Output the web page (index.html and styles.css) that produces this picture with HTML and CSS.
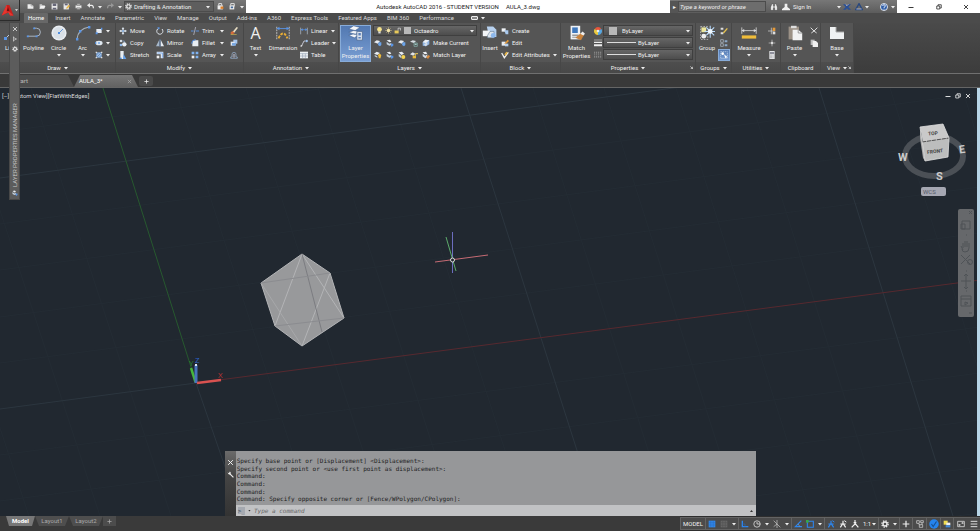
FILE: index.html
```html
<!DOCTYPE html>
<html lang="en">
<head>
<meta charset="utf-8">
<title>Autodesk AutoCAD 2016 - STUDENT VERSION AULA_3.dwg</title>
<link rel="stylesheet" href="styles.css">
</head>
<body>
<svg class="defs" aria-hidden="true">
  <symbol id="caret" viewBox="0 0 4 4"><path d="M0 1h4L2 3.4z" fill="#eee"/></symbol>
  <symbol id="launch" viewBox="0 0 4 4"><path d="M.5.5l3 3M3.5 1v2.5H1" stroke="#ddd" fill="none"/></symbol>
  <symbol id="new" viewBox="0 0 12 12"><path d="M1 2h6l4 3v5H1z" fill="#eee"/><path d="M7 2v3h4" stroke="#888" fill="none"/></symbol>
  <symbol id="open" viewBox="0 0 12 12"><path d="M1 10V2h4l1 2h4v2" fill="#ccc"/><path d="M1 10l2-5h8l-2 5z" fill="#f2f2f2"/></symbol>
  <symbol id="save" viewBox="0 0 12 12"><path d="M1 1h10v10H1z" fill="#e8e8e8"/><path d="M3 1h6v4H3zM3 8h6v3H3z" fill="#667"/></symbol>
  <symbol id="saveas" viewBox="0 0 12 12"><path d="M1 1h9v10H1z" fill="#e8e8e8"/><path d="M3 1h5v3H3z" fill="#667"/><path d="M5 9l5-6 2 2-5 5z" fill="#e7b340"/></symbol>
  <symbol id="print" viewBox="0 0 12 12"><path d="M1 4h10v5H1z" fill="#eee"/><path d="M3 1h6v3H3zM3 8h6v3H3z" fill="#bbb" stroke="#555" stroke-width=".6"/></symbol>
  <symbol id="undo" viewBox="0 0 12 12"><path d="M4 4h4q3 0 3 5" fill="none" stroke="#eee" stroke-width="2"/><path d="M0 4l5-4v8z" fill="#eee"/></symbol>
  <symbol id="redo" viewBox="0 0 12 12"><path d="M8 4H4Q1 4 1 9" fill="none" stroke="#999" stroke-width="2"/><path d="M12 4L7 0v8z" fill="#999"/></symbol>
  <symbol id="gear" viewBox="0 0 12 12"><circle cx="6" cy="6" r="4.7" fill="none" stroke="#eee" stroke-width="2" stroke-dasharray="2 1.7"/><circle cx="6" cy="6" r="3" fill="none" stroke="#eee" stroke-width="2"/></symbol>
  <symbol id="lock" viewBox="0 0 12 12"><path d="M1 4h9v7H1z" fill="#eee"/><path d="M3 4V1h5v3" fill="none" stroke="#eee" stroke-width="1.5"/><path d="M6 6h5v4H6z" fill="#dd7e26"/></symbol>
  <symbol id="lock2" viewBox="0 0 12 12"><path d="M1 4h8v7H1z" fill="#eee"/><path d="M3 4V1h6v5" fill="none" stroke="#eee" stroke-width="1.5"/><path d="M3 6h4v3H3z" fill="#446a9a"/></symbol>
  <symbol id="line" viewBox="0 0 16 16"><path d="M2 14L14 2" stroke="#bcd" /><path d="M1 12h3v3H1zM12 1h3v3h-3z" fill="#5a95e6"/></symbol>
  <symbol id="polyline" viewBox="0 0 20 16"><path d="M2 12h11q5 0 5-5t-5-5h-3" fill="none" stroke="#aeb8c4" stroke-width="1.2"/><path d="M1 11h2.4v2.4H1zM12 11h2.4v2.4H12zM9 1h2.4v2.4H9z" fill="#5a95e6"/></symbol>
  <symbol id="circle" viewBox="0 0 16 16"><circle cx="8" cy="8" r="7.6" fill="#e9edf1"/><circle cx="8" cy="8" r="6" fill="#d9e0e7"/><path d="M8 8l4-4" stroke="#6799d8"/><path d="M7 7h2v2H7z" fill="#4f8ee0"/></symbol>
  <symbol id="arc" viewBox="0 0 16 16"><path d="M2 14Q3 4 14 2" fill="none" stroke="#a6b0ba" stroke-width="1.2"/><path d="M1 13h2.4v2.4H1zM4 5h2.4v2.4H4zM13 1h2.4v2.4H13z" fill="#5a95e6"/></symbol>
  <symbol id="rect" viewBox="0 0 12 12"><path d="M2 3h8v6H2z" fill="#e6ebf2"/><path d="M1 8h3v3H1zM9 1h2v3H9z" fill="#5a95e6"/></symbol>
  <symbol id="ellipse" viewBox="0 0 12 12"><ellipse cx="6" cy="6" rx="5.4" ry="3.5" fill="#dfe7ef"/><path d="M5 5h2v2H5zM0 5h2v2H0z" fill="#3f86e0"/></symbol>
  <symbol id="hatch" viewBox="0 0 12 12"><path d="M2 2h8v8H2z" fill="#9dbde3"/><path d="M2 6l4-4M2 10l8-8M6 10l4-4" stroke="#4c7ab8"/><path d="M1 1h2v2H1zM9 1h2v2H9zM1 9h2v2H1zM9 9h2v2H9z" fill="#ddd"/></symbol>
  <symbol id="move" viewBox="0 0 12 12"><path d="M6 0l2 3H7v2h2V4l3 2-3 2V7H7v2h1l-2 3-2-3h1V7H3v1L0 6l3-2v1h2V3H4z" fill="#dce5ee"/><path d="M5 5h2v2H5z" fill="#4c86cc"/></symbol>
  <symbol id="copy" viewBox="0 0 12 12"><circle cx="3" cy="3" r="2" fill="#d5dde5"/><path d="M5 3h3v3" stroke="#8eb2de" fill="none"/><circle cx="8" cy="8" r="3.3" fill="#e8edf2"/><circle cx="3" cy="9" r="2" fill="#8fb9ea"/></symbol>
  <symbol id="stretch" viewBox="0 0 12 12"><path d="M2 0h5v12H2z" fill="#e8edf2"/><path d="M7 5l4 7H6z" fill="#63a2ee"/><path d="M1 10h3v2H1z" fill="#4c86cc"/></symbol>
  <symbol id="rotate" viewBox="0 0 12 12"><path d="M4 2a4.6 4.6 0 1 0 5 1" fill="none" stroke="#dde3ea" stroke-width="1.5"/><path d="M2 0l4 1-2 3z" fill="#5a95e6"/></symbol>
  <symbol id="mirror" viewBox="0 0 12 12"><path d="M5 1v10H0z" fill="#a6b8ca"/><path d="M7 1v10h5z" fill="#e9eef3"/><path d="M6 0v12" stroke="#5a95e6" stroke-width=".7"/></symbol>
  <symbol id="scale" viewBox="0 0 12 12"><path d="M1 1h10v10H7V5H1z" fill="#dbe7f5"/><path d="M1 7h4v4H1z" fill="#f1f1f1"/><path d="M2 3h8v7" fill="none" stroke="#5a95e6"/></symbol>
  <symbol id="trim" viewBox="0 0 12 12"><path d="M0 6h4M7 6h5" stroke="#5a95e6" stroke-width="1.4"/><path d="M7 0L4 12" stroke="#ccd" /></symbol>
  <symbol id="fillet" viewBox="0 0 12 12"><path d="M2 11V7q0-5 5-5h4v9z" fill="#e8edf2"/><path d="M1 7q0-6 6-6" fill="none" stroke="#5a95e6" stroke-width="1.5"/></symbol>
  <symbol id="array" viewBox="0 0 12 12"><path d="M1 1h4v4H1zM7 1h4v4H7zM7 7h4v4H7z" fill="#7fb2f0"/><path d="M1 7h4v4H1z" fill="#eee"/></symbol>
  <symbol id="erase" viewBox="0 0 12 12"><path d="M4 7l6-7 2 1-6 8z" fill="#eadfc4"/><path d="M1 8l3-2 3 3-3 2H1z" fill="#d36b3b"/><path d="M1 11.5h9" stroke="#e4c54c"/></symbol>
  <symbol id="explode" viewBox="0 0 12 12"><path d="M5 1h6v6H5z" fill="#a8c6ec"/><path d="M1 4h6v6H1z" fill="#e3e9f0"/><path d="M3 6h6v4H3z" fill="#7aa7df"/></symbol>
  <symbol id="offset" viewBox="0 0 12 12"><path d="M1 11V9h2V5q0-3 3-3t3 3v4h2v2z" fill="none" stroke="#9ab5d6"/><path d="M5 10V5h2v5" fill="none" stroke="#bbc"/></symbol>
  <symbol id="dimension" viewBox="0 0 18 18"><path d="M2 2v14M16 2v14" stroke="#ccc" stroke-dasharray="2 1"/><path d="M2 4h14" stroke="#5a95e6"/><path d="M2 4l3-2v4zM16 4l-3-2v4z" fill="#5a95e6"/><path d="M4 15q5-11 10 0" fill="none" stroke="#e9ad35" stroke-width="2.2" stroke-dasharray="3 1.5"/></symbol>
  <symbol id="linear" viewBox="0 0 12 12"><path d="M1 1v10M11 1v10" stroke="#b8c4d2"/><path d="M2 4h8" stroke="#5a95e6"/><path d="M1 4l3-2v4zM11 4L8 2v4z" fill="#5a95e6"/></symbol>
  <symbol id="leader" viewBox="0 0 12 12"><path d="M2 11L6 3h2" stroke="#dde" fill="none" stroke-width="1.2"/><path d="M1 9l3 1-3 2z" fill="#eee"/><circle cx="10" cy="3" r="1.8" fill="#9dc0ec"/></symbol>
  <symbol id="table" viewBox="0 0 12 12"><path d="M0 1h12v10H0z" fill="#eef1f4"/><path d="M0 4h12M0 7.5h12M4 4v7M8 4v7" stroke="#8796a8" stroke-width=".8"/></symbol>
  <symbol id="layers" viewBox="0 0 20 20"><path d="M1 5l6-4 8 2-6 4zM1 9l6-2 8 1-6 4zM1 13l6-2 7 1-6 4z" fill="#f4f6f9" stroke="#3f5f8f" stroke-width=".7"/><path d="M11 8h7v11h-7z" fill="#dce4ee" stroke="#4d6a94"/><path d="M13 10h3v3h-3zM13 15h3v2h-3z" fill="#5a7fb8"/></symbol>
  <symbol id="bulb" viewBox="0 0 12 12"><path d="M6 0q4 0 4 4 0 2-2 4H4Q2 6 2 4q0-4 4-4z" fill="#f5e38a"/><path d="M4 8h4v3H4z" fill="#ddd"/></symbol>
  <symbol id="sun" viewBox="0 0 12 12"><path d="M6 0v12M0 6h12M2 2l8 8M10 2l-8 8" stroke="#d8c489" stroke-width=".8"/><circle cx="6" cy="6" r="2.8" fill="#f4e5a8"/></symbol>
  <symbol id="unlock" viewBox="0 0 12 12"><path d="M1 6h7v5H1z" fill="#e8c95a"/><path d="M7 6V2h4v4" fill="none" stroke="#ddd" stroke-width="1.2"/></symbol>
  <symbol id="layer" viewBox="0 0 12 12"><path d="M0 5l4-3 5 1-3 4z" fill="#e6ebf0"/><path d="M7 5h4v4l-2 2-3-2z" fill="#6ba4ea"/></symbol>
  <symbol id="layer-b" viewBox="0 0 12 12"><path d="M1 2l5-1 2 3-3 1z" fill="#e8edf2"/><path d="M1 4l4 3 3-1v3l-3 1-4-2z" fill="#c3d0dd"/><path d="M7 7h4v3l-3 2z" fill="#5a95e6"/></symbol>
  <symbol id="layer-g" viewBox="0 0 12 12"><path d="M0 4l4-2 5 1-3 3z" fill="#d8dee4"/><path d="M6 6h5v5H6z" fill="none" stroke="#8ab9b4"/><path d="M7 7h3v2H7z" fill="#9ec6c2"/></symbol>
  <symbol id="current" viewBox="0 0 12 12"><path d="M1 5l4-4 6 1v6l-5 3-5-1z" fill="#8fb4e2"/><path d="M1 5l4-4 6 1-5 4z" fill="#eef2f6"/><path d="M3 8l5-3v4l-3 2z" fill="#d4deea"/></symbol>
  <symbol id="layer-y" viewBox="0 0 12 12"><path d="M0 4l4-3 5 2-4 3z" fill="#e8edf2"/><path d="M1 6l4 2v2L1 8z" fill="#c3d0dd"/><path d="M7 4q4 0 4 3l-1 2v2H7V9L6 7z" fill="#eebb3c"/></symbol>
  <symbol id="thaw" viewBox="0 0 12 12"><path d="M1 2l5-1 3 3-4 2z" fill="#e8edf2"/><path d="M1 4l4 3v4L1 8z" fill="#c3d0dd"/><circle cx="8" cy="9" r="3" fill="#f4d34f"/></symbol>
  <symbol id="unlock-layer" viewBox="0 0 12 12"><path d="M0 5l4-3 4 2-3 3z" fill="#dfe4e9"/><path d="M4 7h5v4H4z" fill="#e8b93a"/><path d="M8 7V4h4" stroke="#e8c95a" stroke-width="1.500" fill="none"/></symbol>
  <symbol id="match-layer" viewBox="0 0 12 12"><path d="M1 2l5-1 2 3-4 1z" fill="#eef1f4"/><path d="M1 4l4 3 3-2v4l-3 2-4-3z" fill="#d3dce6"/><path d="M6 9l4-3 2 2-3 4z" fill="#d6893f"/></symbol>
  <symbol id="insert" viewBox="0 0 20 18"><path d="M6 1h8l4 4v9H9" fill="#b7d1ef"/><path d="M1 6h9v7H1z" fill="#f3f5f7"/><path d="M10 7h5v8H7v-3z" fill="#dfe6ee" stroke="#607890" stroke-width=".7"/><circle cx="14" cy="12" r="3" fill="#8cb8ed"/></symbol>
  <symbol id="create" viewBox="0 0 12 12"><path d="M1 2h6v5H1z" fill="#eef1f5"/><path d="M5 5h6v6H7z" fill="#a9c9ee"/></symbol>
  <symbol id="edit" viewBox="0 0 12 12"><path d="M1 4h6v6H1z" fill="#e8edf2"/><path d="M5 7l5-6 2 2-5 5z" fill="#e79b38"/><path d="M6 7h5v4H6z" fill="#b7d1ef"/></symbol>
  <symbol id="attr" viewBox="0 0 12 12"><path d="M1 3l4 7 6-8" fill="none" stroke="#eee" stroke-width="2"/><path d="M5 5l3-4 2 1-3 5z" fill="#e7b340"/></symbol>
  <symbol id="match" viewBox="0 0 20 20"><path d="M2 1h12v17H2z" fill="#eef1f5"/><path d="M4 3h7v7H4z" fill="#3f78bd"/><path d="M4 12h8v2H4zM4 15h6v1H4z" fill="#999"/><path d="M8 16l7-6 4 2-4 7z" fill="#c8823c"/><path d="M14 11l3-3 3 3-2 2z" fill="#eee"/></symbol>
  <symbol id="wheel" viewBox="0 0 12 12"><path d="M6 6L1 3a5.8 5.8 0 0 1 10 0z" fill="#e8553c"/><path d="M6 6l5-3a5.8 5.8 0 0 1-5 9z" fill="#58a7e0"/><path d="M6 6v6A5.8 5.8 0 0 1 1 3z" fill="#eccb3d"/><circle cx="6" cy="6" r="2" fill="#eee"/></symbol>
  <symbol id="weights" viewBox="0 0 12 12"><path d="M0 1h12v1H0zM0 4h12v2H0zM0 8h12v3H0z" fill="#eee"/></symbol>
  <symbol id="types" viewBox="0 0 12 12"><path d="M1 1v10M4 1v10M7 1v10M10 1v10" stroke="#aaa" stroke-dasharray="3 1 1 1"/></symbol>
  <symbol id="group" viewBox="0 0 20 20"><path d="M2 2h9v16H2z" fill="none" stroke="#ccc" stroke-dasharray="2 1.5"/><path d="M3 3h6v6H3z" fill="#ece69b"/><circle cx="6" cy="14" r="3" fill="#eee"/><path d="M14 1v15M7 8h14M9 3l10 10M19 3L9 13" stroke="#b9dcff" stroke-width="1.3"/><circle cx="14" cy="8" r="3" fill="#f3faff"/></symbol>
  <symbol id="ungroup" viewBox="0 0 12 12"><path d="M1 1h4v3H1zM1 8h4v3H1z" fill="#ddd"/><path d="M5 9l6-7" stroke="#e7c350" stroke-width="2"/></symbol>
  <symbol id="groupedit" viewBox="0 0 12 12"><path d="M1 1h4v4H1zM1 7h4v4H1z" fill="none" stroke="#b8c4d2"/><path d="M7 2h4v3H7zM7 8h4v3H7z" fill="#8da9c8"/></symbol>
  <symbol id="groupsel" viewBox="0 0 12 12"><path d="M1 1h10v10H1z" fill="none" stroke="#cde" stroke-dasharray="2 1"/><circle cx="4" cy="4" r="2" fill="#fff"/><path d="M6 5l5 4-3 2z" fill="#fff"/></symbol>
  <symbol id="measure" viewBox="0 0 20 16"><path d="M1 1v8M19 1v8M1 5h18" stroke="#ddd"/><path d="M1 5l3-2v4zM19 5l-3-2v4z" fill="#ddd"/><path d="M1 11h18v4H1z" fill="#f0bd3a"/></symbol>
  <symbol id="idpoint" viewBox="0 0 12 12"><path d="M5 1v10M0 6h10" stroke="#ddd"/><path d="M7 1h4v5H7z" fill="#e59a3a"/><path d="M7 7h4v4H7z" fill="#ddd"/></symbol>
  <symbol id="point" viewBox="0 0 12 12"><path d="M6 1v10M1 6h10" stroke="#ccc"/><circle cx="6" cy="6" r="1.8" fill="#ddd"/></symbol>
  <symbol id="calc" viewBox="0 0 12 12"><path d="M2 0h8v12H2z" fill="#e5e7ea"/><path d="M3 2h6v2H3z" fill="#667"/><path d="M3 6h6M3 8h6M3 10h6" stroke="#888" stroke-dasharray="1 1"/></symbol>
  <symbol id="paste" viewBox="0 0 20 20"><path d="M2 2h13v16H2z" fill="#9b9186"/><path d="M5 1h7v3H5z" fill="#ddd"/><path d="M7 6h7l5 4v9H7z" fill="#f1f2f3"/><path d="M14 6v4h5" fill="none" stroke="#888"/></symbol>
  <symbol id="cut" viewBox="0 0 12 12"><path d="M1 1l5 5 5-5M2 9l4-3 4 3" stroke="#ddd" stroke-width="1.500" fill="none"/></symbol>
  <symbol id="pages" viewBox="0 0 12 12"><path d="M1 1h6v8H1z" fill="#bbb"/><path d="M4 3h5l3 3v6H4z" fill="#f0f0f0"/></symbol>
  <symbol id="base" viewBox="0 0 16 16"><path d="M1 2h6v5h8v7H1z" fill="#eff1f2"/><path d="M7 2v5h8" fill="none" stroke="#aaa"/></symbol>
  <symbol id="binoc" viewBox="0 0 12 12"><path d="M1 11V6l2-5h2v4h2V1h2l2 5v5H7V7H5v4z" fill="#f0f0f0" stroke="#333" stroke-width=".6"/></symbol>
  <symbol id="user" viewBox="0 0 12 12"><path d="M4 1h4v5l4 3v2H0V9l4-3z" fill="#f0f0f0"/></symbol>
  <symbol id="exchange" viewBox="0 0 12 12"><path d="M0 2h4l2 2 2-2h4L8 6l4 4H8L6 8l-2 2H0l4-4z" fill="#294f96"/><path d="M4 2l2 2 2-2" stroke="#dde" fill="none"/></symbol>
  <symbol id="a360" viewBox="0 0 12 12"><path d="M6 1l5 9H1z" fill="none" stroke="#27477f" stroke-width="2"/><path d="M2 9h8" stroke="#dde"/></symbol>
  <symbol id="help" viewBox="0 0 12 12"><circle cx="6" cy="6" r="5.3" fill="#315fa8" stroke="#fff" stroke-width="1.2"/><path d="M4 4.5q0-2 2-2t2 2Q8 6 6 6.500v1M6 8.500v1.300" stroke="#fff" stroke-width="1.2" fill="none"/></symbol>
  <symbol id="min" viewBox="0 0 12 12"><path d="M1 7h10" stroke="currentColor" stroke-width="1.8"/></symbol>
  <symbol id="restore" viewBox="0 0 12 12"><path d="M1.500 4h6v6h-6zM4 4V1.500h6.500V8H8" stroke="currentColor" stroke-width="1.5" fill="none"/></symbol>
  <symbol id="close" viewBox="0 0 12 12"><path d="M2 2l8 8M10 2l-8 8" stroke="currentColor" stroke-width="1.7"/></symbol>
  <symbol id="pin" viewBox="0 0 12 12"><path d="M3 1v10M3 3l6 3-6 3" stroke="currentColor" stroke-width="1.3" fill="none"/></symbol>
  <symbol id="plus" viewBox="0 0 12 12"><path d="M6 1v10M1 6h10" stroke="currentColor" stroke-width="1.8"/></symbol>
  <symbol id="wrench" viewBox="0 0 12 12"><path d="M5 5l6 6" stroke="#eee" stroke-width="2"/><path d="M1 2l2 2 2-3q3 3 0 5-3 1-4-4" fill="#eee"/></symbol>
  <symbol id="grid" viewBox="0 0 12 12"><path d="M1 1h10v10H1z" fill="#2f86ea"/><path d="M1 4h10M1 7.500h10M4 1v10M8 1v10" stroke="#2a68b4" stroke-width=".6"/></symbol>
  <symbol id="snap" viewBox="0 0 12 12"><path d="M1 1h10v10H1z" fill="#666"/><path d="M1 4h10M1 8h10M4 1v10M8 1v10" stroke="#555"/></symbol>
  <symbol id="ortho" viewBox="0 0 12 12"><path d="M2 1v9h9" stroke="#2c86f0" stroke-width="2" fill="none"/><path d="M2 6h4v4" stroke="#2566b6" fill="none"/></symbol>
  <symbol id="polar" viewBox="0 0 12 12"><circle cx="6" cy="6" r="4.800" stroke="#ddd" fill="none" stroke-width="1.2"/><path d="M6 3v3h5" stroke="#ddd" fill="none" stroke-width="1.2"/></symbol>
  <symbol id="iso" viewBox="0 0 12 12"><path d="M1 1l10 10M6 0v12M6 6L1 10" stroke="#ccc" fill="none"/></symbol>
  <symbol id="otrack" viewBox="0 0 12 12"><path d="M11 1L2 10h10" stroke="#2c86f0" stroke-width="1.8" fill="none"/><path d="M6 6l3 4" stroke="#8ac"/></symbol>
  <symbol id="osnap" viewBox="0 0 12 12"><path d="M2 2h9v9H2z" stroke="#2c86f0" stroke-width="1.600" fill="none"/><path d="M0 0h4v4H0z" fill="#37a844"/></symbol>
  <symbol id="anno" viewBox="0 0 12 12"><path d="M6 1v4L2 11M6 5l4 6M2 6h8" stroke="currentColor" stroke-width="1.800" fill="none"/><path d="M8 1l3 2" stroke="currentColor" stroke-width="1.500"/></symbol>
  <symbol id="anno2" viewBox="0 0 12 12"><path d="M6 0v6L1 11M6 5l5 6M4 4h4" stroke="currentColor" stroke-width="1.800" fill="none"/></symbol>
  <symbol id="isolate" viewBox="0 0 12 12"><path d="M1 1h4v4H1zM7 1h4v3H7zM5 7h5v4H5zM3 5l3 3M9 4v3" fill="none" stroke="#ddd"/></symbol>
  <symbol id="hw" viewBox="0 0 12 12"><circle cx="6" cy="6" r="5.700" fill="#2584ee"/><path d="M3 6l2 3 4-6" fill="none" stroke="#174f91" stroke-width="1.300"/></symbol>
  <symbol id="perf" viewBox="0 0 12 12"><path d="M1 1h6v6H1z" fill="#f0dd50"/><path d="M5 4h6v4H5z" fill="#eee"/><path d="M4 8h7v3H4z" fill="#3f8de0"/></symbol>
  <symbol id="clean" viewBox="0 0 12 12"><path d="M1 2h10v8H1zM3 8l2-2M7 6l2-2M7 4h2v2M3 6v2h2" fill="none" stroke="#ddd" stroke-width="1.200"/></symbol>
  <symbol id="menu" viewBox="0 0 12 12"><path d="M1 2h10M1 6h10M1 10h10" stroke="#ddd" stroke-width="1.500"/></symbol>
</svg>

<div class="app">
  <header class="top">
    <button class="app-button" aria-label="Application menu"><svg class="logo" viewBox="0 0 20 20"><path d="M1 17L8 2h4l6 15h-5l-2-4-5 2z" fill="#c8201d"/><path d="M8 2l2 8 8 7h-5l-3-5-9 5z" fill="#e6352e"/><path d="M10 5l2 6H8z" fill="#741010"/></svg><svg class="caret"><use href="#caret"/></svg></button>
    <div class="top-main">
      <div class="titlebar">
        <div class="qat">
          <button aria-label="New"><svg><use href="#new"/></svg></button>
          <button aria-label="Open"><svg><use href="#open"/></svg></button>
          <button aria-label="Save"><svg><use href="#save"/></svg></button>
          <button aria-label="Save as"><svg><use href="#saveas"/></svg></button>
          <button aria-label="Plot"><svg><use href="#print"/></svg></button>
          <button aria-label="Undo"><svg><use href="#undo"/></svg></button>
          <button class="slim" aria-label="Undo list"><svg class="caret"><use href="#caret"/></svg></button>
          <button aria-label="Redo"><svg><use href="#redo"/></svg></button>
          <button class="slim" aria-label="Redo list"><svg class="caret"><use href="#caret"/></svg></button>
          <div class="workspace"><svg><use href="#gear"/></svg><select aria-label="Workspace"><option>Drafting &amp; Annotation</option></select><svg class="caret"><use href="#caret"/></svg></div>
          <button aria-label="Layer lock"><svg><use href="#lock"/></svg></button>
          <button aria-label="Layer unlock"><svg><use href="#lock2"/></svg></button>
          <button class="slim" aria-label="Customize"><svg class="caret"><use href="#caret"/></svg></button>
        </div>
        <h1 class="title"><span>Autodesk AutoCAD 2016 - STUDENT VERSION</span><span>AULA_3.dwg</span></h1>
        <div class="info">
          <button class="search-arrow" aria-label="Collapse search">▸</button>
          <input class="search" aria-label="Search" placeholder="Type a keyword or phrase">
          <button class="find" aria-label="Find"><svg><use href="#binoc"/></svg></button>
          <button class="sign"><svg><use href="#user"/></svg>Sign In</button>
          <svg class="caret"><use href="#caret"/></svg>
          <button class="app-link" aria-label="Exchange"><svg><use href="#exchange"/></svg></button>
          <button class="app-link" aria-label="A360"><svg><use href="#a360"/></svg></button>
          <svg class="caret"><use href="#caret"/></svg>
          <button class="help" aria-label="Help"><svg><use href="#help"/></svg></button>
          <svg class="caret"><use href="#caret"/></svg>
        </div>
        <div class="window-buttons">
          <button aria-label="Minimize"><svg><use href="#min"/></svg></button>
          <button aria-label="Restore"><svg><use href="#restore"/></svg></button>
          <button aria-label="Close"><svg><use href="#close"/></svg></button>
        </div>
      </div>
      <nav class="ribbon-tabs">
        <a class="active" href="#home">Home</a><a href="#insert-tab">Insert</a><a href="#annotate">Annotate</a><a href="#parametric">Parametric</a><a href="#view">View</a><a href="#manage">Manage</a><a href="#output">Output</a><a href="#addins">Add-ins</a><a href="#a360-tab">A360</a><a href="#express">Express Tools</a><a href="#featured">Featured Apps</a><a href="#bim">BIM 360</a><a href="#performance">Performance</a>
        <button aria-label="Ribbon display"><i class="pill"></i><svg class="caret"><use href="#caret"/></svg></button>
      </nav>
    </div>
  </header>

  <div class="ribbon">
    <section class="panel draw">
      <div class="tools">
        <button class="big"><svg><use href="#line"/></svg><span>Line</span></button>
        <button class="big"><svg><use href="#polyline"/></svg><span>Polyline</span></button>
        <button class="big"><svg><use href="#circle"/></svg><span>Circle</span><svg class="caret"><use href="#caret"/></svg></button>
        <button class="big"><svg><use href="#arc"/></svg><span>Arc</span><svg class="caret"><use href="#caret"/></svg></button>
        <div class="col">
          <button class="row" aria-label="Rectangle"><svg><use href="#rect"/></svg><svg class="caret"><use href="#caret"/></svg></button>
          <button class="row" aria-label="Ellipse"><svg><use href="#ellipse"/></svg><svg class="caret"><use href="#caret"/></svg></button>
          <button class="row" aria-label="Hatch"><svg><use href="#hatch"/></svg><svg class="caret"><use href="#caret"/></svg></button>
        </div>
      </div>
      <h2>Draw<svg class="caret"><use href="#caret"/></svg></h2>
    </section>
    <section class="panel modify">
      <div class="tools">
        <div class="col">
          <button class="row"><svg><use href="#move"/></svg>Move</button>
          <button class="row"><svg><use href="#copy"/></svg>Copy</button>
          <button class="row"><svg><use href="#stretch"/></svg>Stretch</button>
        </div>
        <div class="col">
          <button class="row"><svg><use href="#rotate"/></svg>Rotate</button>
          <button class="row"><svg><use href="#mirror"/></svg>Mirror</button>
          <button class="row"><svg><use href="#scale"/></svg>Scale</button>
        </div>
        <div class="col spread">
          <button class="row"><svg><use href="#trim"/></svg><span>Trim</span><svg class="caret"><use href="#caret"/></svg></button>
          <button class="row"><svg><use href="#fillet"/></svg><span>Fillet</span><svg class="caret"><use href="#caret"/></svg></button>
          <button class="row"><svg><use href="#array"/></svg><span>Array</span><svg class="caret"><use href="#caret"/></svg></button>
        </div>
        <div class="col center">
          <button class="row" aria-label="Erase"><svg><use href="#erase"/></svg></button>
          <button class="row" aria-label="Explode"><svg><use href="#explode"/></svg></button>
          <button class="row" aria-label="Offset"><svg><use href="#offset"/></svg></button>
        </div>
      </div>
      <h2>Modify<svg class="caret"><use href="#caret"/></svg></h2>
    </section>
    <section class="panel annotation">
      <div class="tools">
        <button class="big"><b class="glyph">A</b><span>Text</span><svg class="caret"><use href="#caret"/></svg></button>
        <button class="big"><svg><use href="#dimension"/></svg><span>Dimension</span></button>
        <div class="col spread">
          <button class="row"><svg><use href="#linear"/></svg><span>Linear</span><svg class="caret"><use href="#caret"/></svg></button>
          <button class="row"><svg><use href="#leader"/></svg><span>Leader</span><svg class="caret"><use href="#caret"/></svg></button>
          <button class="row"><svg><use href="#table"/></svg><span>Table</span></button>
        </div>
      </div>
      <h2>Annotation<svg class="caret"><use href="#caret"/></svg></h2>
    </section>
    <section class="panel layers">
      <div class="tools">
        <button class="big pressed"><svg><use href="#layers"/></svg><span>Layer<br>Properties</span></button>
        <div class="col">
          <div class="combo"><svg><use href="#bulb"/></svg><svg><use href="#sun"/></svg><svg><use href="#unlock"/></svg><i class="swatch"></i><select aria-label="Layer"><option>Octaedro</option></select><svg class="caret"><use href="#caret"/></svg></div>
          <div class="row strip"><button aria-label="Off"><svg><use href="#layer"/></svg></button><button aria-label="Isolate"><svg><use href="#layer-b"/></svg></button><button aria-label="Freeze"><svg><use href="#layer"/></svg></button><button aria-label="Lock"><svg><use href="#layer-g"/></svg></button><button><svg><use href="#current"/></svg>Make Current</button></div>
          <div class="row strip"><button aria-label="On"><svg><use href="#layer-y"/></svg></button><button aria-label="Unisolate"><svg><use href="#layer-b"/></svg></button><button aria-label="Thaw"><svg><use href="#thaw"/></svg></button><button aria-label="Unlock"><svg><use href="#unlock-layer"/></svg></button><button><svg><use href="#match-layer"/></svg>Match Layer</button></div>
        </div>
      </div>
      <h2>Layers<svg class="caret"><use href="#caret"/></svg></h2>
    </section>
    <section class="panel block">
      <div class="tools">
        <button class="big"><svg><use href="#insert"/></svg><span>Insert</span></button>
        <div class="col spread">
          <button class="row"><svg><use href="#create"/></svg><span>Create</span></button>
          <button class="row"><svg><use href="#edit"/></svg><span>Edit</span></button>
          <button class="row"><svg><use href="#attr"/></svg><span>Edit Attributes</span><svg class="caret"><use href="#caret"/></svg></button>
        </div>
      </div>
      <h2>Block<svg class="caret"><use href="#caret"/></svg></h2>
    </section>
    <section class="panel properties">
      <div class="tools">
        <button class="big"><svg><use href="#match"/></svg><span>Match<br>Properties</span></button>
        <div class="col center">
          <button class="row" aria-label="Color"><svg><use href="#wheel"/></svg></button>
          <button class="row" aria-label="Lineweight"><svg><use href="#weights"/></svg></button>
          <button class="row" aria-label="Linetype"><svg><use href="#types"/></svg></button>
        </div>
        <div class="col">
          <div class="combo"><i class="swatch"></i><select aria-label="Object color"><option>ByLayer</option></select><svg class="caret"><use href="#caret"/></svg></div>
          <div class="combo"><i class="rule"></i><select aria-label="Object lineweight"><option>ByLayer</option></select><svg class="caret"><use href="#caret"/></svg></div>
          <div class="combo"><i class="rule"></i><select aria-label="Object linetype"><option>ByLayer</option></select><svg class="caret"><use href="#caret"/></svg></div>
        </div>
      </div>
      <h2>Properties<svg class="caret"><use href="#caret"/></svg><svg class="launch"><use href="#launch"/></svg></h2>
    </section>
    <section class="panel groups">
      <div class="tools">
        <button class="big"><svg><use href="#group"/></svg><span>Group</span></button>
        <div class="col center">
          <button class="row" aria-label="Ungroup"><svg><use href="#ungroup"/></svg></button>
          <button class="row" aria-label="Group edit"><svg><use href="#groupedit"/></svg></button>
          <button class="row pressed" aria-label="Group selection"><svg><use href="#groupsel"/></svg></button>
        </div>
      </div>
      <h2>Groups<svg class="caret"><use href="#caret"/></svg></h2>
    </section>
    <section class="panel utilities">
      <div class="tools">
        <button class="big"><svg><use href="#measure"/></svg><span>Measure</span><svg class="caret"><use href="#caret"/></svg></button>
        <div class="col center">
          <button class="row" aria-label="Quick select"><svg><use href="#idpoint"/></svg></button>
          <button class="row" aria-label="ID point"><svg><use href="#point"/></svg></button>
          <button class="row" aria-label="Calculator"><svg><use href="#calc"/></svg></button>
        </div>
      </div>
      <h2>Utilities<svg class="caret"><use href="#caret"/></svg></h2>
    </section>
    <section class="panel clipboard">
      <div class="tools">
        <button class="big"><svg><use href="#paste"/></svg><span>Paste</span><svg class="caret"><use href="#caret"/></svg></button>
        <div class="col center">
          <button class="row" aria-label="Cut"><svg><use href="#cut"/></svg></button>
          <button class="row" aria-label="Copy clip"><svg><use href="#pages"/></svg></button>
        </div>
      </div>
      <h2>Clipboard</h2>
    </section>
    <section class="panel view">
      <div class="tools">
        <button class="big"><svg><use href="#base"/></svg><span>Base</span><svg class="caret"><use href="#caret"/></svg></button>
      </div>
      <h2>View<svg class="caret"><use href="#caret"/></svg><svg class="launch"><use href="#launch"/></svg></h2>
    </section>
  </div>

  <nav class="doc-tabs">
    <a class="tab" href="#start">Start</a>
    <a class="tab current" href="#aula">AULA_3*<svg><use href="#close"/></svg></a>
    <button aria-label="New drawing"><svg><use href="#plus"/></svg></button>
  </nav>

  <main class="canvas">
    <svg class="scene" viewBox="0 88 980 428" preserveAspectRatio="xMinYMin slice">
      <g stroke="#242c34" fill="none">
        <path d="M-183 88L-43 516M-112 88L29 516M-40 88L100 516M31 88L171 516M175 88L313 516M246 88L384 516M318 88L455 516M389 88L526 516M533 88L669 516M604 88L740 516M676 88L811 516M747 88L882 516M890 88L1024 516M962 88L1095 516"/>
        <path d="M0 132L980 0M0 224L980 93M0 270L980 140M0 317L980 187M0 363L980 233M0 455L980 327M0 501L980 373M0 547L980 420M0 593L980 467M0 639L980 513"/>
      </g>
      <path d="M0 178L980 47M461 88L598 516M819 88L953 516M0 409L196 383L242 516" stroke="#2c363f" fill="none"/>
      <path d="M103 88L196 383" stroke="#27592f"/>
      <path d="M196 383L980 280" stroke="#57292f"/>
      <path d="M302 254L330 273L344 318L302 346L275 326L261 283Z" fill="#98999b" stroke="#b4b5b7"/>
      <path d="M302 254L275 326M302 254L344 318M330 273L302 346" stroke="#b3b4b6" fill="none"/>
      <path d="M261 283L302 346" stroke="#a7a8aa"/>
      <path d="M302 254L322 332" stroke="#7b7c80"/>
      <path d="M261 283L330 273M275 326L344 318" stroke="#8b8c90"/>
      <path d="M452.500 232V273" stroke="#6c6dbe"/>
      <path d="M446 237L456 271" stroke="#5dab6b"/>
      <path d="M435 262L488 255" stroke="#c56b74"/>
      <circle cx="452.500" cy="260" r="2" fill="#23292f" stroke="#ddd"/>
      <path d="M195.500 382L191 368" stroke="#46b53b" stroke-width="2.500"/>
      <path d="M196 383V365" stroke="#4773bb" stroke-width="3"/>
      <path d="M197 383L221 380" stroke="#d95250" stroke-width="2.500"/>
      <path d="M195 364h2v2h-2z" fill="#dce8f8"/>
      <g class="axis"><text x="218" y="378" fill="#bd3434">X</text><text x="189" y="366" fill="#258c2d">Y</text><text x="195" y="363" fill="#2b63ca">Z</text></g>
    </svg>

    <div class="view-label">[–][Custom View][FlatWithEdges]</div>
    <div class="view-buttons">
      <button aria-label="Minimize view"><svg><use href="#min"/></svg></button>
      <button aria-label="Restore view"><svg><use href="#restore"/></svg></button>
      <button aria-label="Close view"><svg><use href="#close"/></svg></button>
    </div>
    <svg class="cube" viewBox="895 118 76 66">
      <ellipse cx="934" cy="156" rx="29" ry="20" fill="none" stroke="#4b5056" stroke-width="6"/>
      <path d="M920 127l5 34-2-3-3-20z" fill="#aaa"/>
      <path d="M920 127l23-3 6 14-26 4z" fill="#c9c9c9"/>
      <path d="M922 142l27-4-1 19-23 4z" fill="#bcbdbd"/>
      <path d="M922 142l27-4" stroke="#555" stroke-dasharray="4 1"/>
      <path d="M920 127l23-3 6 14-1 19-23 4z" fill="none" stroke="#dedede" stroke-width=".8"/>
      <g class="face"><text x="928" y="135" transform="rotate(-5 934 133)">TOP</text><text x="927" y="153" transform="rotate(-7 936 151)">FRONT</text></g>
      <g class="compass"><text x="898" y="161">W</text><text x="959" y="153" transform="rotate(-8 962 150)">E</text><text x="936" y="180">S</text></g>
    </svg>
    <button class="wcs">WCS</button>
    <div class="navbar"><svg viewBox="0 0 16 108" fill="none" stroke="#4f5357">
      <path d="M11 2l3 3M14 2l-3 3M4 12h8v8H4zM3 15h4v5H3zM8 26h1M5 41l-2-4M5 34v5M7 32v6M9 32v6M11 34v5q0 4-4 4-3 0-3-3M3 46l9 9M12 46l-9 9M8 62h1M8 65v15M3 72h10M6 67l2-2 2 2M6 78l2 2 2-2M8 82h1M3 87h10v10H3zM3 90h10M7 93l3 1-3 2zM11 104h3"/><circle cx="12" cy="53" r="2.500"/></svg></div>

    <section class="command">
      <div class="command-side"><button aria-label="Close command line"><svg><use href="#close"/></svg></button><button aria-label="Customize command line"><svg><use href="#wrench"/></svg></button></div>
      <div class="command-main">
        <div class="history"><p>Specify base point or [Displacement] &lt;Displacement&gt;:</p><p>Specify second point or &lt;use first point as displacement&gt;:</p><p>Command:</p><p>Command:</p><p>Command:</p><p>Command: Specify opposite corner or [Fence/WPolygon/CPolygon]:</p></div>
        <label class="prompt"><span class="prompt-icon">&gt;_</span><i class="dark-caret"></i><input aria-label="Command" placeholder="Type a command"><i class="dark-caret up"></i></label>
      </div>
    </section>
  </main>

  <footer class="status">
    <nav class="layout-tabs"><a class="current" href="#model">Model</a><a href="#layout1">Layout1</a><a href="#layout2">Layout2</a><button aria-label="New layout"><svg><use href="#plus"/></svg></button></nav>
    <div class="toggles">
      <div class="set"><button class="model">MODEL</button></div>
      <div class="set"><button aria-label="Grid"><svg><use href="#grid"/></svg></button><button aria-label="Snap"><svg><use href="#snap"/></svg></button><button class="slim" aria-label="Snap list"><svg class="caret"><use href="#caret"/></svg></button></div>
      <div class="set"><button aria-label="Ortho"><svg><use href="#ortho"/></svg></button><button aria-label="Polar"><svg><use href="#polar"/></svg></button><button class="slim" aria-label="Polar list"><svg class="caret"><use href="#caret"/></svg></button><button aria-label="Isodraft"><svg><use href="#iso"/></svg></button><button class="slim" aria-label="Isodraft list"><svg class="caret"><use href="#caret"/></svg></button></div>
      <div class="set"><button aria-label="Object tracking"><svg><use href="#otrack"/></svg></button><button aria-label="Object snap"><svg><use href="#osnap"/></svg></button><button class="slim" aria-label="Snap modes"><svg class="caret"><use href="#caret"/></svg></button></div>
      <div class="set"><button class="blue" aria-label="Annotation visibility"><svg><use href="#anno"/></svg></button><button aria-label="Auto scale"><svg><use href="#anno"/></svg></button><button aria-label="Annotation scale"><svg><use href="#anno2"/></svg></button><button class="ratio">1:1<svg class="caret"><use href="#caret"/></svg></button></div>
      <div class="set"><button aria-label="Workspace switching"><svg><use href="#gear"/></svg></button><button class="slim" aria-label="Workspace list"><svg class="caret"><use href="#caret"/></svg></button></div>
      <div class="set"><button aria-label="Annotation monitor"><svg><use href="#plus"/></svg></button></div>
      <div class="set wide"><button aria-label="Isolate objects"><svg><use href="#isolate"/></svg></button></div>
      <div class="set wide"><button class="hw" aria-label="Hardware acceleration"><svg><use href="#hw"/></svg></button></div>
      <div class="set"><button aria-label="Performance"><svg><use href="#perf"/></svg></button></div>
      <div class="set wide"><button aria-label="Clean screen"><svg><use href="#clean"/></svg></button><button aria-label="Customization"><svg><use href="#menu"/></svg></button></div>
    </div>
  </footer>

  <aside class="palette">
    <button aria-label="Close palette"><svg><use href="#close"/></svg></button>
    <button aria-label="Auto-hide"><svg><use href="#pin"/></svg></button>
    <button aria-label="Palette options"><svg><use href="#gear"/></svg></button>
    <span>LAYER PROPERTIES MANAGER</span>
    <button aria-label="Palette menu"><svg><use href="#layer-b"/></svg></button>
  </aside>
</div>
</body>
</html>
```
FILE: styles.css
```css
* { box-sizing: border-box; }

body {
  margin: 0;
  font: 6px/8px Roboto, "Open Sans", sans-serif;
  color: #f0f0f0;
  background: #3a3a3a;
}

h1, h2, p { margin: 0; font: inherit; }
a { color: inherit; text-decoration: none; }
svg { display: block; flex: none; width: 8px; height: 8px; }
svg.caret { width: 4px; height: 4px; }
svg.launch { width: 3px; height: 3px; }
.defs { position: absolute; width: 0; height: 0; }

button, input, select {
  margin: 0;
  padding: 0;
  border: 0;
  background: none;
  color: inherit;
  font: inherit;
  appearance: none;
  min-width: 0;
}

button { display: flex; align-items: center; justify-content: center; white-space: nowrap; }
select { flex: 1; }

.app { position: relative; display: flex; flex-direction: column; height: 100vh; overflow: hidden; }

/* Title bar and ribbon tabs */
.top { display: flex; height: 23px; flex: none; background: #4b4b4b; }
.app-button { width: 20px; height: 21px; background: linear-gradient(#777, #4a4a4a); border: 1px solid #2c2c2c; border-width: 0 1px 1px 0; }
.logo { width: 14px; height: 15px; }
.app-button .caret { width: 3px; }
.top-main { flex: 1; display: flex; flex-direction: column; min-width: 0; }
.titlebar { display: flex; height: 13px; background: #fff; }
.qat { display: flex; align-items: center; width: 226px; padding-left: 4px; background: linear-gradient(#777, #5c5c5c); }
.qat > button { width: 12px; height: 12px; }
.qat > .slim { width: 8px; }
.qat > button svg:not(.caret) { width: 7px; height: 7px; }
.workspace { flex: 1; display: flex; align-items: center; gap: 2px; height: 11px; padding: 0 3px 0 0; background: #5e5e5e; border: 1px solid #4c4c4c; }
.workspace svg:not(.caret) { width: 7px; height: 7px; }
.title { flex: 1; display: flex; justify-content: center; gap: 7px; color: #222; line-height: 13px; white-space: nowrap; }
.info { display: flex; align-items: center; width: 227px; background: linear-gradient(#777, #5c5c5c); }
.search-arrow { width: 8px; height: 12px; background: #555; }
.search { width: 88px; height: 11px; padding-left: 1px; background: #6d6d6d; border: 1px solid #4c4c4c; font-style: italic; }
.search::placeholder, .prompt input::placeholder { color: inherit; opacity: 1; }
.app-link { width: 12px; }
.find { width: 15px; }
.sign { width: 56px; gap: 3px; justify-content: flex-start; padding-left: 1px; }
.help { width: 22px; padding-left: 8px; }
.window-buttons { display: flex; width: 83px; color: #222; }
.window-buttons button { flex: 1; }
.window-buttons svg { width: 6px; height: 6px; }
.ribbon-tabs { display: flex; height: 10px; line-height: 10px; padding-left: 4px; color: #ddd; white-space: nowrap; }
.ribbon-tabs a { padding: 0 5px; }
.ribbon-tabs .active { padding: 0 4px; margin-right: 2px; color: #fff; background: #686868; border-radius: 1px 1px 0 0; }
.ribbon-tabs button { gap: 3px; margin-left: 12px; }
.pill { width: 7px; height: 4px; border: 1px solid #eee; border-radius: 1px; background: #888; }

/* Ribbon panels */
.ribbon { display: flex; height: 51px; flex: none; background: linear-gradient(#4a4a4a, #3c3c3c); border-bottom: 1px solid #707070; }
.panel { display: flex; flex-direction: column; flex: none; border-right: 1px solid #474747; background: #555; }
.tools { display: grid; height: 39px; padding-top: 2px; }
.panel h2 { position: relative; display: flex; flex: 1; align-items: center; justify-content: center; gap: 3px; background: linear-gradient(#4e4e4e, #484848); }
.launch { position: absolute; right: 2px; }
.big { flex-direction: column; justify-content: flex-start; text-align: center; height: 37px; }
.big > svg:first-child { width: 16px; height: 16px; margin-bottom: 3px; }
.glyph { height: 19px; font: 16px/16px "Open Sans", sans-serif; }
.big .caret { margin-top: 1px; }
.pressed { background: linear-gradient(#5177b0, #7a9fd4); box-shadow: inset 0 0 0 1px #88acd9; }
.col { display: flex; flex-direction: column; min-width: 0; }
.row { display: flex; align-items: center; justify-content: flex-start; gap: 3px; height: 12px; width: 100%; }
.spread .row span { flex: 1; text-align: left; }
.center .row { justify-content: center; }
.draw { width: 116px; }
.draw .tools { grid-template-columns: 21px 25px 25px 23px 1fr; }
.draw .row { padding-left: 1px; gap: 3px; }
.modify { width: 128px; }
.modify .tools { grid-template-columns: 37px 35px 33px 1fr; padding-left: 3px; }
.annotation { width: 95px; }
.annotation .tools { grid-template-columns: 23px 30px 36px; gap: 1px; justify-content: start; }
.annotation .row { padding-left: 1px; }
.layers { width: 142px; }
.layers .tools { grid-template-columns: 31px 1fr; gap: 2px; padding-left: 1px; padding-right: 3px; }
.strip { gap: 4px; padding-left: 1px; }
.strip button { gap: 3px; }
.block { width: 80px; }
.block .tools { grid-template-columns: 18px 1fr; gap: 2px; padding-right: 3px; }
.block .row { gap: 3px; }
.properties { width: 135px; }
.properties .tools { grid-template-columns: 31px 11px 1fr; padding-right: 2px; }
.groups { width: 36px; }
.groups .tools { grid-template-columns: 22px 12px; }
.groups .row { width: 12px; }
.utilities { width: 49px; }
.utilities .tools { grid-template-columns: 34px 12px; }
.clipboard { width: 40px; }
.clipboard .tools { grid-template-columns: 27px 11px; }
.view { width: 33px; }

.combo { display: flex; align-items: center; gap: 2px; height: 11px; margin-bottom: 1px; padding: 0 2px; background: linear-gradient(#666, #4d4d4d); border: 1px solid #3f3f3f; }
.combo svg:not(.caret) { width: 7px; height: 7px; }
.swatch { width: 7px; height: 7px; margin: 0 1px; background: #b8b8b8; }
.properties .swatch { width: 8px; height: 8px; margin: 0 3px; }
.rule { width: 29px; height: 1px; margin-left: 1px; background: #ddd; }

/* Drawing tabs */
.doc-tabs { display: flex; align-items: flex-end; height: 14px; flex: none; padding-left: 10px; background: #393939; border-bottom: 1px solid #656565; }
.tab { display: flex; align-items: center; height: 12px; width: 64px; padding-left: 5px; background: #4c4c4c; color: #bbb; clip-path: polygon(0 0, 58px 0, 100% 100%, 0 100%); }
.tab svg { width: 5px; height: 5px; color: #aaa; }
.tab.current { justify-content: space-between; padding: 0 6px 0 5px; color: #fff; background: linear-gradient(#777, #626262); clip-path: polygon(6px 0, 58px 0, 100% 100%, 0 100%); }
.doc-tabs button { width: 14px; height: 10px; margin: 0 0 1px 1px; background: #4a4a4a; border-radius: 2px; }
.doc-tabs button svg { width: 5px; height: 5px; }

/* Drawing area */
.canvas { position: relative; flex: 1; min-height: 0; background: #212830; border-right: 3px solid #b8d6e8; }
.scene { position: absolute; top: 0; left: 0; width: 100vw; height: 100%; clip-path: inset(0 3px 0 0); }
.axis { font: 8px "Open Sans", sans-serif; }
.view-label { position: absolute; top: 4px; left: 2px; color: #ddd; }
.view-buttons { position: absolute; top: 5px; right: 6px; display: flex; gap: 4px; }
.view-buttons svg { width: 6px; height: 6px; }
.cube { position: absolute; top: 30px; right: 6px; width: 76px; height: 66px; }
.face { font: bold 5px Roboto, sans-serif; fill: #444; }
.compass { font: bold 11px Roboto, sans-serif; fill: #ccc; }
.wcs { position: absolute; top: 99px; right: 31px; width: 25px; height: 9px; justify-content: flex-start; padding-left: 2px; border-radius: 2px; color: #555a68; background: #a5a7b2; }
.navbar { position: absolute; top: 121px; right: 3px; border-radius: 2px; background: #66686b; }
.navbar svg { width: 16px; height: 108px; }

.command { position: absolute; left: 23%; right: 22.600%; bottom: 0; display: flex; height: 65px; }
.command-side { display: flex; flex-direction: column; align-items: center; gap: 5px; width: 11px; padding-top: 8px; background: linear-gradient(#6b6b6b, #444 40%, #333); }
.command-side svg { width: 7px; height: 7px; }
.command-main { flex: 1; display: flex; flex-direction: column; background: #969799; color: #1c1c1c; font-family: "DejaVu Sans Mono", monospace; }
.history { flex: 1; display: grid; grid-template-rows: repeat(6, 1fr); padding: 6px 1px 2px; line-height: 7px; }
.prompt { display: flex; align-items: center; gap: 3px; height: 11px; padding: 0 3px 0 2px; background: #c1c2c4; color: #666; }
.prompt-icon { color: #345; background: #a5a9b0; line-height: 7px; }
.prompt input { flex: 1; font-style: italic; }
.dark-caret { width: 3px; height: 2px; background: #333; clip-path: polygon(0 0, 100% 0, 50% 100%); }
.up { transform: rotate(180deg); }

/* Status bar */
.status { display: flex; justify-content: space-between; height: 15px; flex: none; background: #3a3a3a; }
.layout-tabs { display: flex; height: 10px; padding-left: 6px; line-height: 10px; color: #aaa; }
.layout-tabs a { width: 34px; text-align: center; background: #4e4e4e; clip-path: polygon(0 0, 100% 0, 30px 100%, 4px 100%); }
.layout-tabs .current { width: 29px; color: #fff; font-weight: bold; background: #777; clip-path: polygon(0 0, 100% 0, 26px 100%, 3px 100%); }
.layout-tabs button { width: 13px; background: #4c4c4c; }
.layout-tabs svg { width: 5px; height: 5px; }
.toggles { display: flex; padding: 1px 0; background: #2e2e2e; }
.set { display: flex; background: #4b4b4b; border: 1px solid #636363; border-right: 0; }
.set button { width: 12px; }
.set .slim { width: 8px; }
.set .model { width: 24px; }
.set .ratio { width: 17px; gap: 1px; }
.set.wide button { width: 13px; }
.set .blue { color: #2c86f0; }
.set .hw svg { width: 10px; height: 10px; }

/* Docked palette */
.palette { position: absolute; left: 9px; top: 22px; display: flex; flex-direction: column; align-items: center; gap: 2px; width: 11px; height: 178px; padding: 2px 0; background: #5c5c5c; border: 1px solid #484848; color: #ddd; }
.palette button { height: 8px; }
.palette svg { width: 6px; height: 6px; }
.palette span { flex: 1; writing-mode: vertical-rl; transform: rotate(180deg); line-height: 9px; white-space: nowrap; color: #c8c8c8; }
```
